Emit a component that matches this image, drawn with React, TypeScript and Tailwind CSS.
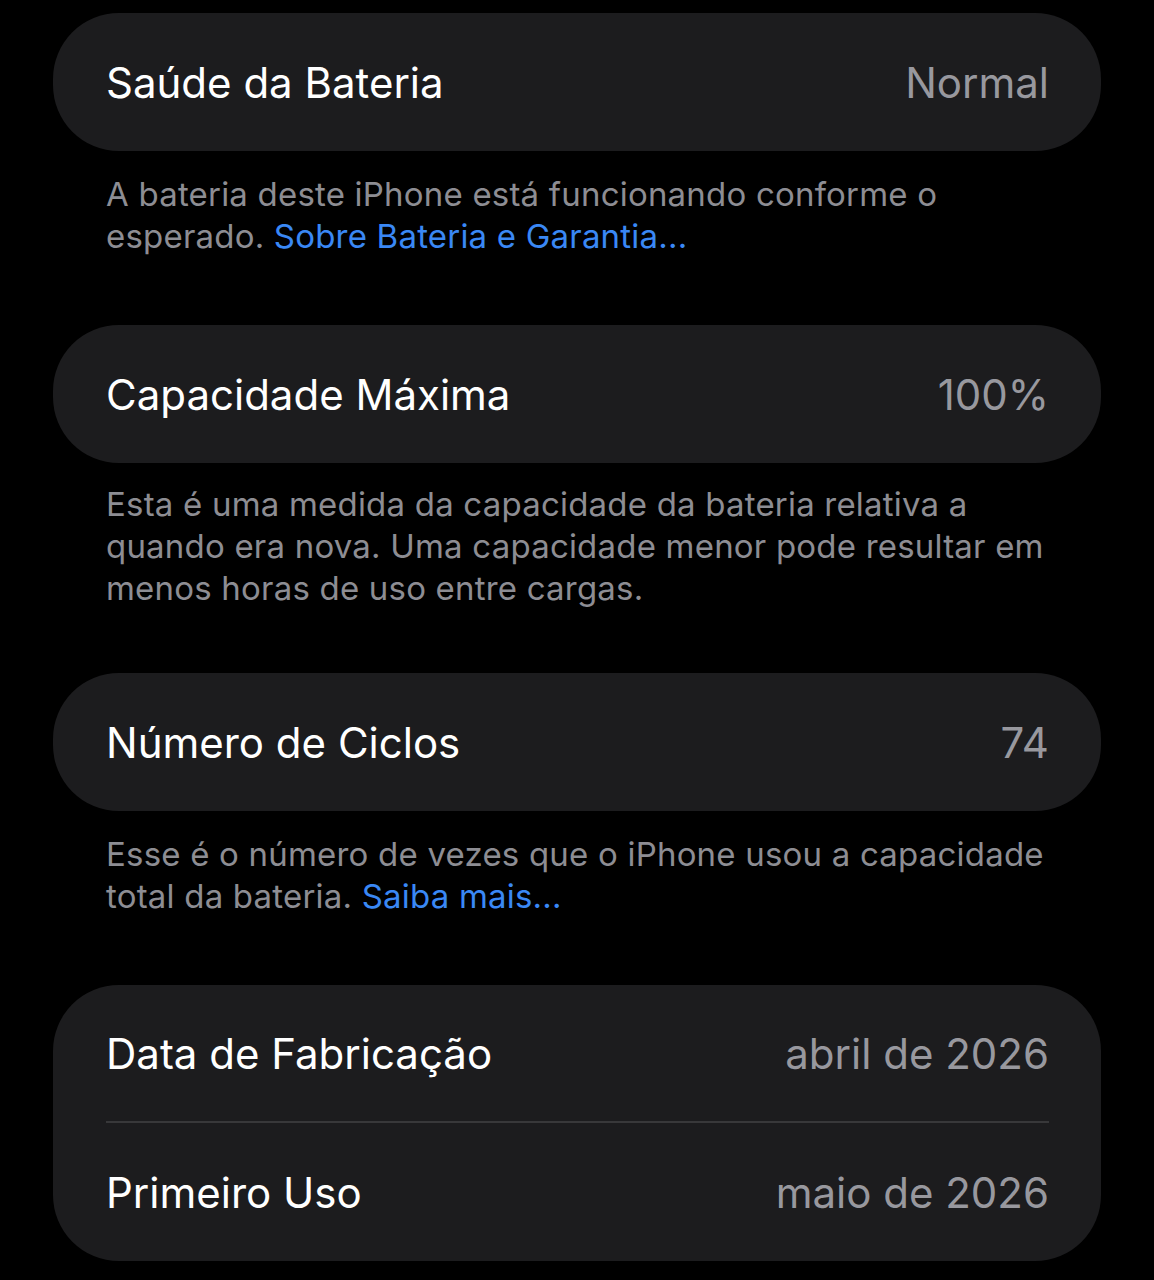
import React from "react";

const font = { fontFamily: "Inter, 'Noto Sans', sans-serif" };

function Row({ label, value, h }: { label: string; value: string; h: string }) {
  return (
    <div className={`flex items-center justify-between ${h} pl-[53px] pr-[52px]`}>
      <span className="text-white text-[42px] tracking-[0px]">{label}</span>
      <span className="text-[#98989e] text-[42px] tracking-[0px]">{value}</span>
    </div>
  );
}

function Footer({ children, mt }: { children: React.ReactNode; mt: string }) {
  return (
    <p className={`${mt} pl-[106px] pr-[40px] text-[#8d8d93] text-[33px] leading-[42px] tracking-[0.2px] whitespace-nowrap`}>
      {children}
    </p>
  );
}

export default function App() {
  return (
    <div className="min-h-[1280px] bg-black pt-[13px] pb-[20px]" style={font}>
      <div className="mx-[53px] rounded-[66px] bg-[#1c1c1e]">
        <Row label="Saúde da Bateria" value="Normal" h="h-[138px]" />
      </div>
      <Footer mt="mt-[22px]">
        A bateria deste iPhone está funcionando conforme o
        <br />
        esperado. <span className="text-[#3a88f5]">Sobre Bateria e Garantia...</span>
      </Footer>

      <div className="mt-[68px] mx-[53px] rounded-[66px] bg-[#1c1c1e]">
        <Row label="Capacidade Máxima" value="100%" h="h-[138px]" />
      </div>
      <Footer mt="mt-[20px]">
        Esta é uma medida da capacidade da bateria relativa a
        <br />
        quando era nova. Uma capacidade menor pode resultar em
        <br />
        menos horas de uso entre cargas.
      </Footer>

      <div className="mt-[64px] mx-[53px] rounded-[66px] bg-[#1c1c1e]">
        <Row label="Número de Ciclos" value="74" h="h-[138px]" />
      </div>
      <Footer mt="mt-[22px]">
        Esse é o número de vezes que o iPhone usou a capacidade
        <br />
        total da bateria. <span className="text-[#3a88f5]">Saiba mais...</span>
      </Footer>

      <div className="mt-[68px] mx-[53px] rounded-[66px] bg-[#1c1c1e]">
        <Row label="Data de Fabricação" value="abril de 2026" h="h-[136px]" />
        <div className="ml-[53px] mr-[52px] h-[2px] bg-[#38383a]" />
        <Row label="Primeiro Uso" value="maio de 2026" h="h-[138px]" />
      </div>
    </div>
  );
}
